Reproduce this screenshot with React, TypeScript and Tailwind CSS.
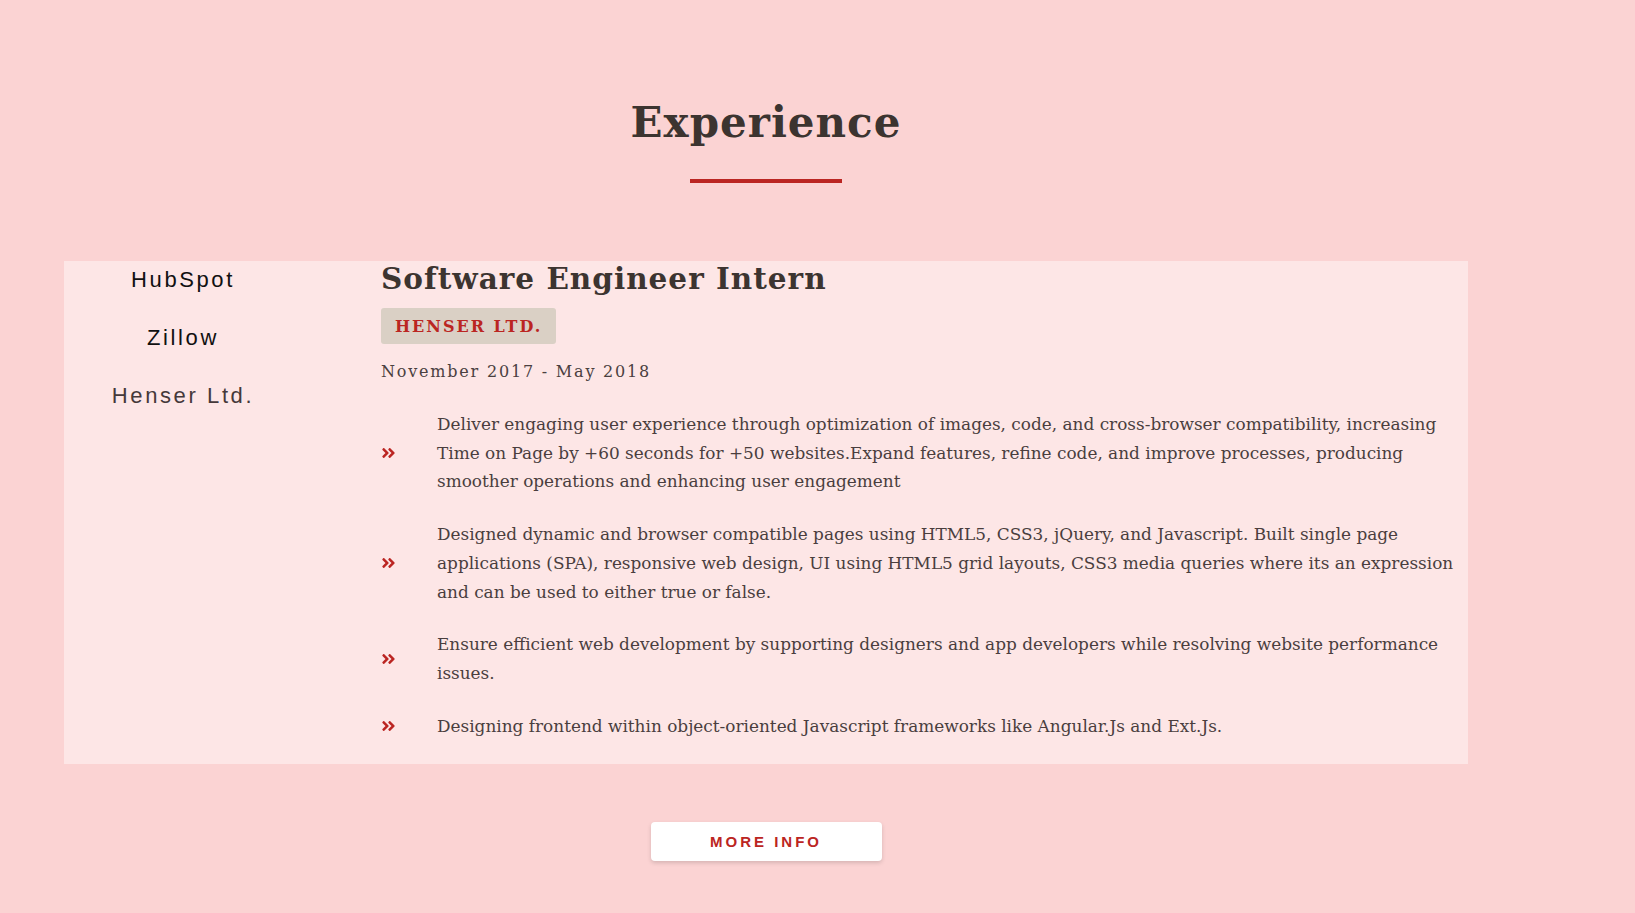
import { FaAngleDoubleRight } from "react-icons/fa";

const companies = [
  { name: "HubSpot", active: false },
  { name: "Zillow", active: false },
  { name: "Henser Ltd.", active: true },
];

const duties = [
  "Deliver engaging user experience through optimization of images, code, and cross-browser compatibility, increasing Time on Page by +60 seconds for +50 websites.Expand features, refine code, and improve processes, producing smoother operations and enhancing user engagement",
  "Designed dynamic and browser compatible pages using HTML5, CSS3, jQuery, and Javascript. Built single page applications (SPA), responsive web design, UI using HTML5 grid layouts, CSS3 media queries where its an expression and can be used to either true or false.",
  "Ensure efficient web development by supporting designers and app developers while resolving website performance issues.",
  "Designing frontend within object-oriented Javascript frameworks like Angular.Js and Ext.Js.",
];

const serif = "font-['DejaVu_Serif','Liberation_Serif',serif]";

const App = () => {
  return (
    <div className="min-h-[913px] w-full bg-[#fbd3d3] pt-[93px] pb-[52px]">
      <div className="ml-[64px] w-[1404px]">
        {/* Heading */}
        <h2
          className={`${serif} text-center text-[42px] leading-[60px] font-bold tracking-[1px] text-[#3c3430]`}
        >
          Experience
        </h2>
        <div className="mx-auto mt-[26px] h-[4px] w-[152px] bg-[#bb2522]" />

        {/* Card */}
        <div className="mt-[78px] flex bg-[#fde6e6] pb-[24px]">
          {/* Tabs */}
          <div className="flex w-[238px] flex-col items-center gap-[32px] pt-[6px]">
            {companies.map((c) => (
              <button
                key={c.name}
                className={`font-['Liberation_Sans',Arial,sans-serif] text-[22px] leading-[26px] tracking-[2.6px] ${
                  c.active ? "text-[#45393a]" : "text-[#111111]"
                }`}
              >
                {c.name}
              </button>
            ))}
          </div>

          {/* Details */}
          <div className="ml-[79px] flex-1 pr-[8px]">
            <h3
              className={`${serif} text-[29.5px] leading-[36px] font-bold tracking-[1px] text-[#3c3430]`}
            >
              Software Engineer Intern
            </h3>
            <div className="mt-[11px] inline-block rounded-[3px] bg-[#dad0c5] px-[14px] py-[6px]">
              <span
                className={`${serif} text-[16px] leading-[21px] font-bold tracking-[2px] text-[#bb2522]`}
              >
                HENSER LTD.
              </span>
            </div>
            <p
              className={`${serif} mt-[16px] text-[16px] leading-[24px] tracking-[1.8px] text-[#4a4040]`}
            >
              November 2017 - May 2018
            </p>

            {/* Duties */}
            <ul className="mt-[26px] flex flex-col gap-[24px]">
              {duties.map((d, i) => (
                <li key={i} className="flex items-center">
                  <FaAngleDoubleRight className="h-[16px] w-[15px] shrink-0 text-[#bb2522]" />
                  <p
                    className={`${serif} ml-[41px] text-[16.9px] leading-[28.7px] text-[#4a3e3e]`}
                  >
                    {d}
                  </p>
                </li>
              ))}
            </ul>
          </div>
        </div>

        {/* Button */}
        <div className="mt-[58px] flex justify-center">
          <button className="h-[39px] w-[231px] rounded-[4px] bg-white font-['Liberation_Sans',Arial,sans-serif] text-[15px] font-bold tracking-[3px] text-[#bb2522] shadow-[0_2px_4px_rgba(0,0,0,0.15)]">
            MORE INFO
          </button>
        </div>
      </div>
    </div>
  );
};

export default App;
